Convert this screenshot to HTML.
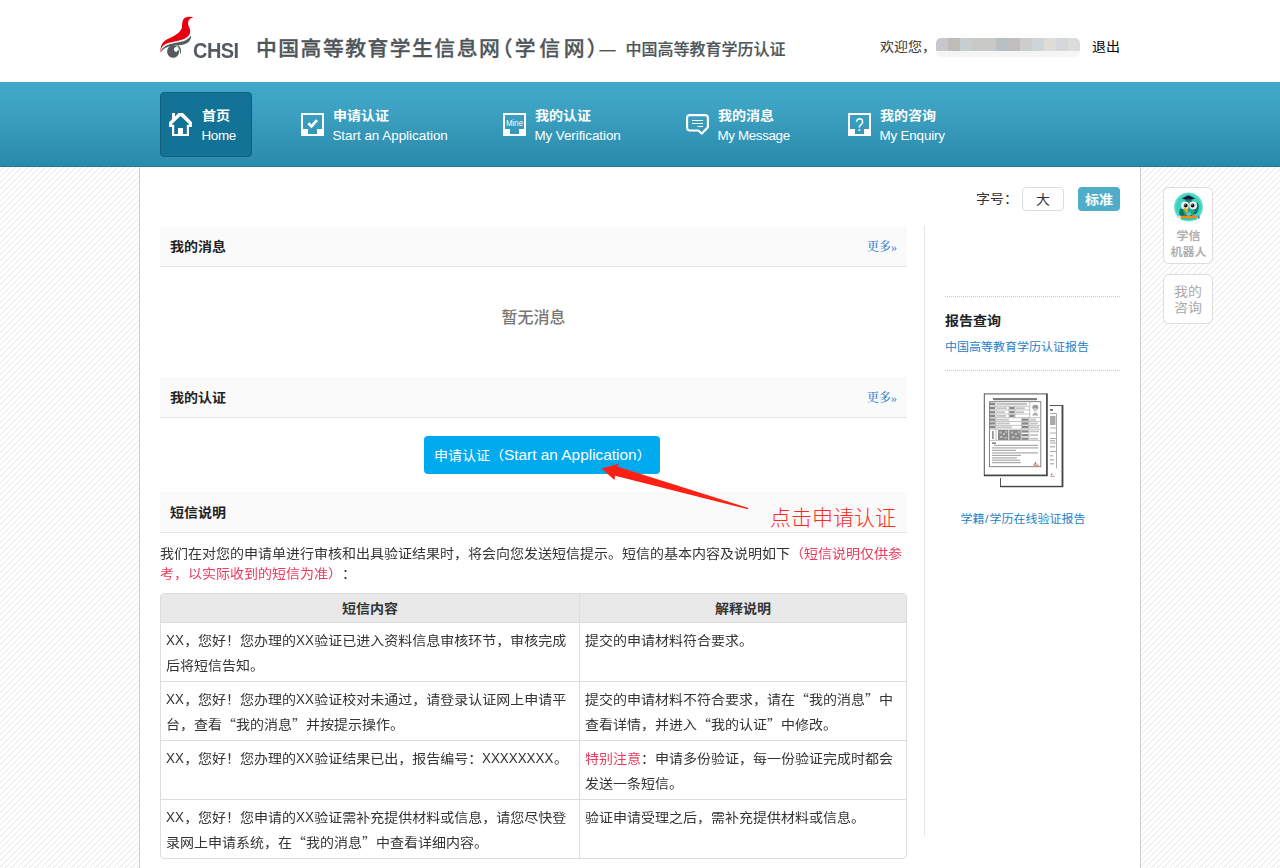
<!DOCTYPE html>
<html lang="zh-CN">
<head>
<meta charset="utf-8">
<title>中国高等教育学历认证</title>
<style>
*{box-sizing:border-box;margin:0;padding:0;text-spacing-trim:space-all}
html,body{width:1280px;height:868px;overflow:hidden;background:#fff}
body{position:relative;font-family:"Liberation Sans","Noto Sans CJK SC",sans-serif;font-size:14px;color:#333;line-height:1}
a{text-decoration:none;color:inherit}
.abs{position:absolute;white-space:nowrap}
#bgpat{position:absolute;left:0;top:167px;width:1280px;height:701px}
#header{position:absolute;left:0;top:0;width:1280px;height:82px;background:#fff}
#nav{position:absolute;left:0;top:82px;width:1280px;height:85px;background:linear-gradient(#42a9c9 0%,#3b9fc0 40%,#2a8aab 100%);border-bottom:1px solid #1c7f9f}
#main{position:absolute;left:139px;top:167px;width:1002px;height:701px;background:#fff;border-left:1px solid #ccc;border-right:1px solid #ccc}
.navi{position:absolute;top:10px;height:65px;color:#fff}
.navi .cn{position:absolute;top:16px;font-size:14px;font-weight:bold;white-space:nowrap;transform:translateY(0.500px) scaleY(0.910)}
.navi .en{position:absolute;top:37px;font-size:13.400px;white-space:nowrap;margin-left:-0.600px;letter-spacing:-0.050px}
.navi svg{position:absolute}
.sech{position:absolute;left:160px;width:747px;height:41px;background:#fafafa;border-bottom:1px solid #e6e6e6}
.sech b{position:absolute;left:10px;top:13px;font-size:14px;color:#222;transform:translateY(0.500px) scaleY(0.910)}
.sech a{position:absolute;right:10px;top:15px;font-size:12px;color:#3380d0;font-family:"Liberation Serif","Noto Serif CJK SC",serif;font-weight:500}

.p{position:absolute;left:160px;top:543px;width:747px;font-size:14px;line-height:23.077px;color:#333;white-space:nowrap;transform:scaleY(0.91);transform-origin:0 0}
.red{color:#ee3a5c}
#tbl{position:absolute;left:160px;top:593px;width:747px;height:266px;border:1px solid #ddd;border-radius:4px;overflow:hidden;background:#fff}
#tbl .th{position:absolute;top:0;height:28px;background:#e8e8e8;font-weight:bold;font-size:14px;line-height:28px;text-align:center;color:#333}
#tbl .td{position:absolute;font-size:14px;line-height:25px;color:#333;padding:5px 5px 0 5px;white-space:nowrap;border-top:1px solid #ddd}
#tbl .c1{left:0;width:419px;border-right:1px solid #ddd}
#tbl .c2{left:419px;width:326px}
.dot{position:absolute;left:945px;width:175px;height:0;border-top:1px dotted #c8c8c8}
.lnk{color:#1c7fc9;font-size:12px}
.fl{position:absolute;left:1163px;width:50px;background:#fff;border:1px solid #ddd;border-radius:6px;text-align:center;color:#aaa}
q{quotes:none;line-height:0;font-family:"Noto Sans CJK SC",sans-serif}
q:before,q:after{content:none}
.pl,.pr{font-feature-settings:"halt";letter-spacing:0}
.pl{margin:0 2px 0 1px}
.pr{margin:0 0 0 -1.500px}
u{text-decoration:none;display:inline-block;line-height:1;font-size:16.500px;transform:scaleX(0.810);transform-origin:0 50%;margin-right:-3.900px}
u.x8{margin-right:-16.400px}
.sq{line-height:27.473px;transform:scaleY(0.91);transform-origin:0 0;margin-top:1px}
.s{display:inline-block;transform:translateY(0.500px) scaleY(0.910)}
.sd{transform:translateY(0.500px) scaleY(0.910)}
</style>
</head>
<body>
<svg id="bgpat" width="1280" height="701">
<defs><pattern id="dg" width="6" height="6" patternUnits="userSpaceOnUse" x="3" y="1">
<path d="M-1 7L7 -1" stroke="#e0e0e0" stroke-width="0.8" fill="none"/>
<path d="M-1 1L1 -1M5 7L7 5" stroke="#e0e0e0" stroke-width="0.8" fill="none"/>
</pattern></defs>
<rect width="1280" height="701" fill="url(#dg)"/>
</svg>

<div id="header">
  <svg class="abs" style="left:155px;top:10px" width="90" height="60" viewBox="155 10 90 60">
<path d="M192.97 17.24C192.56 16.97 189.57 16.56 188.05 16.82C186.53 17.08 184.80 17.70 183.83 18.79C182.86 19.88 182.56 21.78 182.21 23.36C181.86 24.94 182.33 26.70 181.72 28.28C181.11 29.86 180.07 31.44 178.55 32.85C177.03 34.26 174.75 35.49 172.58 36.72C170.41 37.95 167.40 38.82 165.55 40.23C163.70 41.64 162.38 43.17 161.47 45.16C160.56 47.15 159.97 51.90 160.06 52.19C160.15 52.48 160.88 48.38 162.03 46.91C163.18 45.44 164.61 44.36 166.95 43.4C169.29 42.44 173.16 41.94 176.09 41.15C179.02 40.36 182.36 39.72 184.53 38.69C186.70 37.66 188.16 36.23 189.1 34.96C190.04 33.69 190.12 32.32 190.16 31.09C190.19 29.86 189.66 28.81 189.31 27.58C188.96 26.35 188.17 24.88 188.05 23.71C187.93 22.54 188.20 21.43 188.61 20.55C189.02 19.67 189.78 18.99 190.51 18.44C191.24 17.89 193.38 17.51 192.97 17.24Z" fill="#e60012"/>
<path d="M160.48 52.75C160.40 52.52 161.39 49.62 162.59 48.32C163.79 47.02 165.41 45.89 167.66 44.95C169.91 44.01 173.16 43.46 176.09 42.7C179.02 41.94 182.98 41.28 185.23 40.38C187.48 39.48 188.63 38.10 189.59 37.28C190.55 36.46 190.81 35.25 191.0 35.45C191.19 35.65 191.09 37.42 190.72 38.48C190.34 39.53 189.66 40.88 188.75 41.78C187.84 42.68 186.75 43.30 185.23 43.89C183.71 44.48 181.72 44.95 179.61 45.3C177.50 45.65 174.69 45.67 172.58 46.0C170.47 46.33 168.53 46.65 166.95 47.27C165.37 47.89 164.17 48.82 163.09 49.73C162.01 50.64 160.56 52.98 160.48 52.75Z" fill="#545b5f"/>
<ellipse cx="173.100" cy="51.500" rx="6" ry="6.300" fill="#545b5f"/>
<path d="M178.300 45.300Q181.300 47.700 181.100 51Q181 53 180.300 54.500Q180.200 51.500 179.300 49.300Q178.600 47.500 177.300 46Z" fill="#545b5f"/>
<circle cx="176.300" cy="49.500" r="2.400" fill="#fff"/>
<circle cx="177.900" cy="51.400" r="1" fill="#545b5f"/>
</svg>
  <div class="abs" id="logotxt" style="left:192.800px;top:41px;font-size:21.500px;font-weight:bold;color:#545b60;letter-spacing:-0.600px;transform:scaleX(0.930);transform-origin:0 0">CHSI</div>
  <div class="abs" id="title1" style="left:256px;top:39px;font-size:20.800px;font-weight:500;color:#4f5659;letter-spacing:1.500px;-webkit-text-stroke:0.300px #4f5659">中国高等教育学生信息网<span class="pl">（</span><span style="letter-spacing:3.700px">学信网</span><span class="pr">）</span></div>
  <div class="abs" id="title2" style="left:599.500px;top:42px;font-size:16px;font-weight:500;color:#4f5659;-webkit-text-stroke:0.200px #4f5659"><span style="display:inline-block;width:26px">—</span>中国高等教育学历认证</div>
  <div class="abs sd" id="welcome" style="left:880px;top:38.500px;font-size:14px;color:#333">欢迎您，</div>
  <div class="abs" id="mosaic" style="left:936px;top:37.500px;width:144px;height:19px;border-radius:5px;overflow:hidden;filter:blur(0.6px)"><i style="position:absolute;left:0px;top:0;width:12px;height:13px;background:#c9c7cb"></i><i style="position:absolute;left:0px;top:13px;width:12px;height:6px;background:#f5f5f5"></i><i style="position:absolute;left:12px;top:0;width:12px;height:13px;background:#bfbbb8"></i><i style="position:absolute;left:12px;top:13px;width:12px;height:6px;background:#f5f5f5"></i><i style="position:absolute;left:24px;top:0;width:12px;height:13px;background:#c8cdd0"></i><i style="position:absolute;left:24px;top:13px;width:12px;height:6px;background:#f5f5f5"></i><i style="position:absolute;left:36px;top:0;width:12px;height:13px;background:#c9c9c8"></i><i style="position:absolute;left:36px;top:13px;width:12px;height:6px;background:#f5f5f5"></i><i style="position:absolute;left:48px;top:0;width:12px;height:13px;background:#c9c9c8"></i><i style="position:absolute;left:48px;top:13px;width:12px;height:6px;background:#f5f5f5"></i><i style="position:absolute;left:60px;top:0;width:12px;height:13px;background:#b9c0c4"></i><i style="position:absolute;left:60px;top:13px;width:12px;height:6px;background:#f5f5f5"></i><i style="position:absolute;left:72px;top:0;width:12px;height:13px;background:#c0bebe"></i><i style="position:absolute;left:72px;top:13px;width:12px;height:6px;background:#f5f5f5"></i><i style="position:absolute;left:84px;top:0;width:12px;height:13px;background:#cdcdcd"></i><i style="position:absolute;left:84px;top:13px;width:12px;height:6px;background:#f5f5f5"></i><i style="position:absolute;left:96px;top:0;width:12px;height:13px;background:#cdd5d9"></i><i style="position:absolute;left:96px;top:13px;width:12px;height:6px;background:#f5f5f5"></i><i style="position:absolute;left:108px;top:0;width:12px;height:13px;background:#dedcd8"></i><i style="position:absolute;left:108px;top:13px;width:12px;height:6px;background:#f5f5f5"></i><i style="position:absolute;left:120px;top:0;width:12px;height:13px;background:#d5d8da"></i><i style="position:absolute;left:120px;top:13px;width:12px;height:6px;background:#f5f5f5"></i><i style="position:absolute;left:132px;top:0;width:12px;height:13px;background:#dcdcda"></i><i style="position:absolute;left:132px;top:13px;width:12px;height:6px;background:#f5f5f5"></i></div>
  <div class="abs sd" id="logout" style="left:1092px;top:38.500px;font-size:14px;color:#000">退出</div>
</div>

<div id="nav">
  <div class="navi" style="left:160px;width:92px;background:#127396;border:1px solid #0d5f7c;border-radius:4px">
    <svg style="left:8px;top:20px" width="24" height="24" viewBox="0 0 24 24"><path fill="#fff" fill-rule="evenodd" d="M9.500 0H14L23 9.300V14H20V23H3V14H0V9.300L3 6.300V0H6V3.500ZM11.500 3.100L3.100 11V11.700H5.200V21H9V15H14V21H17.800V11.700H20V11Z"/></svg><span class="cn" style="left:41px;top:15px">首页</span><span class="en" style="left:41px;top:36px;letter-spacing:-0.300px">Home</span>
  </div>
  <div class="navi" style="left:300px"><svg style="left:1px;top:21px" width="23" height="23" viewBox="0 0 23 23"><path fill="#fff" fill-rule="evenodd" d="M0 0H23V23H0ZM2 2V16H7V21H16V16H21V2Z"/><path d="M7.300 10.200L10.500 13.300L16 7.200" fill="none" stroke="#fff" stroke-width="2.700"/></svg><span class="cn" style="left:33px">申请认证</span><span class="en" style="left:33px;letter-spacing:0px">Start an Application</span></div>
  <div class="navi" style="left:502px"><svg style="left:1px;top:21px" width="23" height="23" viewBox="0 0 23 23"><path fill="#fff" fill-rule="evenodd" d="M0 0H23V23H0ZM2 2V16H7V21H16V16H21V2Z"/><text x="11.500" y="13" font-family="Liberation Sans,sans-serif" font-size="9" fill="#fff" text-anchor="middle" textLength="17" lengthAdjust="spacingAndGlyphs">Mine</text></svg><span class="cn" style="left:33px">我的认证</span><span class="en" style="left:33px">My Verification</span></div>
  <div class="navi" style="left:685px"><svg style="left:0px;top:21px" width="25" height="24" viewBox="0 0 25 24"><path d="M5 2.100H20Q22.900 2.100 22.900 5V14.300L16.800 20.500L13.200 17.500H5Q2.100 17.500 2.100 14.600V5Q2.100 2.100 5 2.100Z" fill="none" stroke="#fff" stroke-width="2.100" stroke-linejoin="miter"/><path d="M7 7.500H18M7 10.500H18M12.500 13.500H18" stroke="#fff" stroke-width="1.100" fill="none"/></svg><span class="cn" style="left:33px">我的消息</span><span class="en" style="left:33px;letter-spacing:-0.350px">My Message</span></div>
  <div class="navi" style="left:847px"><svg style="left:1px;top:21px" width="23" height="23" viewBox="0 0 23 23"><path fill="#fff" fill-rule="evenodd" d="M0 0H23V23H0ZM2 2V16H7V21H16V16H21V2Z"/><text transform="translate(11.500 18.100) scale(0.86 1)" x="0" y="0" font-family="Liberation Sans,sans-serif" font-size="17.500" fill="#fff" text-anchor="middle">?</text></svg><span class="cn" style="left:33px">我的咨询</span><span class="en" style="left:33px;letter-spacing:-0.150px">My Enquiry</span></div>
</div>

<div id="main"></div>

<div class="abs sd" style="left:976px;top:191px;font-size:14px;color:#333">字号：</div>
<div class="abs" style="left:1022px;top:187px;width:42px;height:24px;border:1px solid #ddd;border-radius:4px;background:#fff;text-align:center;line-height:22px;font-size:14px;color:#333"><span class="s">大</span></div>
<div class="abs" style="left:1078px;top:187px;width:42px;height:24px;border-radius:4px;background:#4fadc9;text-align:center;line-height:24px;font-size:14px;color:#fff;font-weight:bold"><span class="s">标准</span></div>

<div class="sech" style="top:226px"><b>我的消息</b><a>更多»</a></div>
<div class="abs" style="left:160px;top:310px;width:747px;text-align:center;font-size:16px;color:#777;font-weight:500">暂无消息</div>
<div class="sech" style="top:377px"><b>我的认证</b><a>更多»</a></div>
<div class="abs" style="left:424px;top:436px;width:236px;height:38px;background:#00aaef;border-radius:4px;color:#fff;font-size:14px;line-height:37px;padding-left:10px"><span class="s">申请认证（</span><span style="font-size:15.400px;letter-spacing:0">Start an Application</span><span class="s">）</span></div>
<div class="sech" style="top:492px"><b>短信说明</b></div>


<svg class="abs" style="left:590px;top:455px" width="170" height="60" viewBox="590 455 170 60">
<polygon points="748.300,507.900 617,466.600 619.500,463.600 601.500,468.600 614.500,480 615,475.800 747.800,509.300" fill="#ff2014"/>
</svg>
<div class="abs" style="left:770px;top:507px;font-size:21px;color:#ff2a1e;font-weight:300">点击申请认证</div>

<div class="p">我们在对您的申请单进行审核和出具验证结果时，将会向您发送短信提示。短信的基本内容及说明如下<span class="red">（短信说明仅供参<br>考，以实际收到的短信为准）</span>：</div>

<div id="tbl">
  <div class="th c1"><span class="s">短信内容</span></div><div class="th c2"><span class="s">解释说明</span></div>
  <div class="td c1" style="top:28px;height:59px"><div class="sq"><u>XX</u>，您好！您办理的<u>XX</u>验证已进入资料信息审核环节，审核完成<br>后将短信告知。</div></div>
  <div class="td c2" style="top:28px;height:59px"><div class="sq">提交的申请材料符合要求。</div></div>
  <div class="td c1" style="top:87px;height:59px"><div class="sq"><u>XX</u>，您好！您办理的<u>XX</u>验证校对未通过，请登录认证网上申请平<br>台，查看<q>“</q>我的消息<q>”</q>并按提示操作。</div></div>
  <div class="td c2" style="top:87px;height:59px"><div class="sq">提交的申请材料不符合要求，请在<q>“</q>我的消息<q>”</q>中<br>查看详情，并进入<q>“</q>我的认证<q>”</q>中修改。</div></div>
  <div class="td c1" style="top:146px;height:59px"><div class="sq"><u>XX</u>，您好！您办理的<u>XX</u>验证结果已出，报告编号：<u class="x8">XXXXXXXX</u>。</div></div>
  <div class="td c2" style="top:146px;height:59px"><div class="sq"><span class="red">特别注意</span>：申请多份验证，每一份验证完成时都会<br>发送一条短信。</div></div>
  <div class="td c1" style="top:205px;height:59px"><div class="sq"><u>XX</u>，您好！您申请的<u>XX</u>验证需补充提供材料或信息，请您尽快登<br>录网上申请系统，在<q>“</q>我的消息<q>”</q>中查看详细内容。</div></div>
  <div class="td c2" style="top:205px;height:59px"><div class="sq">验证申请受理之后，需补充提供材料或信息。</div></div>
</div>

<div class="abs" style="left:924px;top:226px;width:1px;height:610px;background:#e6e6e6"></div>
<div class="dot" style="top:296px"></div>
<div class="abs sd" style="left:945px;top:313px;font-size:14px;font-weight:bold;color:#222">报告查询</div>
<div class="abs lnk sd" style="left:945px;top:341px">中国高等教育学历认证报告</div>
<div class="dot" style="top:370px"></div>
<svg class="abs" style="left:975px;top:385px" width="96" height="110" viewBox="975 385 96 110">
<g id="docback">
<rect x="1000.500" y="405.500" width="61.500" height="80.800" fill="#fff" stroke="#555" stroke-width="1"/>
<path d="M1000 486.600H1062.700V405" fill="none" stroke="#444" stroke-width="1.400"/>
<g stroke="#999" stroke-width="0.800" fill="none"><path d="M1050 413.500H1056.500V468.500M1050 428H1056.500M1050 433H1056.500M1050 438.500H1056.500M1050 443H1056.500M1050 451.500H1056.500"/></g>
<rect x="1050" y="416" width="5.500" height="9" fill="#aaa"/>
<rect x="1050" y="409" width="3" height="1.800" fill="#777"/>
<g fill="#bbb"><rect x="1050" y="440" width="5" height="1.500"/><rect x="1050" y="446" width="5" height="1.500"/><rect x="1050" y="455" width="3" height="1.500"/><rect x="1050" y="459" width="4" height="1.500"/><rect x="1050" y="463" width="4" height="1.500"/></g>
<path d="M1050.500 475.500l2-3.300-.7 2.500 1.600-.3z" fill="#d22"/><rect x="1050.500" y="475.800" width="4" height="1.200" fill="#c99"/>
</g>
<g id="docfront">
<rect x="983" y="392.500" width="66.500" height="85.500" fill="#fff"/>
<rect x="984.300" y="393.900" width="62.300" height="81.300" fill="#fff" stroke="#555" stroke-width="1"/>
<path d="M983.900 475.500H1047V393.500" fill="none" stroke="#444" stroke-width="1.500"/>
<rect x="993" y="398" width="44" height="2.200" fill="#666" opacity="0.850"/>
<rect x="989.500" y="401.700" width="51.300" height="65" fill="none" stroke="#777" stroke-width="0.900"/>
<g stroke="#aaa" stroke-width="0.700" fill="none">
<path d="M989.500 406.300H1029.800M989.500 410H1029.800M989.500 414H1029.800M989.500 417.700H1040.800M989.500 421.500H1040.800M989.500 425.400H1040.800M989.500 429.200H1040.800M989.500 440.400H1040.800"/>
<path d="M1029.800 401.700V417.700M996 401.700V429M1009 406.300V417.700M1015 406.300V417.700M1021.500 417.700V440.400M1029 417.700V440.400M996 429.200V440.400"/>
</g>
<g fill="#888"><rect x="990" y="402.700" width="5" height="2.600"/><rect x="990" y="407" width="5" height="2.300"/><rect x="990" y="411" width="5" height="2.300"/><rect x="990" y="414.700" width="5" height="2.300"/><rect x="1009.500" y="407" width="5" height="2.300"/><rect x="1009.500" y="411" width="5" height="2.300"/><rect x="1009.500" y="414.700" width="5" height="2.300"/><rect x="990" y="418.500" width="5.500" height="2.300"/><rect x="990" y="422.300" width="5.500" height="2.300"/><rect x="990" y="426" width="5.500" height="2.300"/><rect x="1022" y="418.500" width="6.500" height="2.300"/><rect x="1022" y="422.300" width="6.500" height="2.300"/><rect x="1022" y="426" width="6.500" height="2.300"/><rect x="1022" y="430.300" width="6.500" height="2.300"/><rect x="1022" y="434" width="6.500" height="2.300"/><rect x="1022" y="437.600" width="6.500" height="2.300"/></g>
<g fill="#c4c4c4"><rect x="997" y="403" width="30" height="2.200"/><rect x="997" y="407.300" width="10" height="1.800"/><rect x="997" y="411.300" width="8" height="1.800"/><rect x="997" y="415" width="9" height="1.800"/><rect x="1016" y="407.300" width="9" height="1.800"/><rect x="1016" y="411.300" width="8" height="1.800"/><rect x="997" y="418.800" width="12" height="1.800"/><rect x="997" y="422.600" width="13" height="1.800"/><rect x="997" y="426.400" width="15" height="1.800"/><rect x="1030" y="418.800" width="6" height="1.800"/><rect x="1030" y="422.600" width="8" height="1.800"/><rect x="1030" y="426.400" width="9" height="1.800"/><rect x="1030" y="430.500" width="9" height="1.800"/><rect x="1030" y="434.200" width="8" height="1.800"/><rect x="1030" y="437.800" width="8" height="1.800"/></g>
<ellipse cx="1035.300" cy="407.300" rx="3" ry="2.600" fill="#999"/><path d="M1032 415.500q3.300-6 6.600 0z" fill="#aaa"/><rect x="1033.300" y="408" width="4" height="3.500" rx="1.500" fill="#ccc"/>
<rect x="998" y="430" width="10.400" height="10" fill="#8a8a8a"/><rect x="1009.200" y="430" width="11.600" height="10" fill="#8a8a8a"/>
<g fill="#fff" opacity="0.450"><rect x="999.500" y="431.500" width="2" height="2"/><rect x="1003" y="433" width="2" height="2"/><rect x="1005.500" y="431" width="1.500" height="2"/><rect x="1000" y="436" width="2.500" height="2"/><rect x="1004.500" y="437" width="2" height="1.500"/><rect x="1011" y="431.500" width="2" height="2"/><rect x="1015" y="433" width="2" height="2"/><rect x="1018" y="431" width="1.500" height="2"/><rect x="1012" y="436" width="2.500" height="2"/><rect x="1016.500" y="437" width="2" height="1.500"/></g>
<rect x="992" y="431" width="1.800" height="8" fill="#999"/>
<g fill="#aaa"><rect x="992" y="442.500" width="4" height="1.300" fill="#666"/><rect x="994" y="444.800" width="44" height="1.200"/><rect x="992" y="447.300" width="46" height="1.200"/><rect x="992" y="449.800" width="24" height="1.200"/><rect x="992" y="452.300" width="46" height="1.200"/><rect x="992" y="454.800" width="29" height="1.200"/><rect x="992" y="457.300" width="25" height="1.200"/><rect x="992" y="459.600" width="28" height="1.200"/><rect x="992" y="462" width="29" height="1.200"/></g>
<path d="M1033.500 465l2.800-4.300-.8 3 2.200-.4z" fill="#d22"/><rect x="1033.800" y="464.500" width="5" height="1.300" fill="#c88"/>
</g>
</svg>
<div class="abs lnk sd" style="left:945px;top:513px;width:156px;text-align:center">学籍<span style="letter-spacing:1px;margin-left:0.500px">/</span>学历在线验证报告</div>

<div class="fl" style="top:187px;height:77px">
  <svg class="abs" style="left:10px;top:4.400px" width="29" height="30" viewBox="1174 192.500 29 30">
<defs><radialGradient id="og" cx="0.5" cy="0.5" r="0.5"><stop offset="0" stop-color="#2fc9b3"/><stop offset="0.820" stop-color="#3fd0bb"/><stop offset="1" stop-color="#74e4d3"/></radialGradient></defs>
<circle cx="1188.500" cy="207.500" r="14.500" fill="url(#og)"/>
<path d="M1180.500 209q-2.500 4 0 7.500l4 .5 1-7z" fill="#0c7463"/>
<path d="M1197.500 202.500q3 5.500-1 11.500l-4 1.500 1-6q3-3 4-7z" fill="#0c7463"/>
<ellipse cx="1188.800" cy="209.500" rx="5.800" ry="6.800" fill="#23a892"/>
<path d="M1181.900 198.900l6.600-3.100 6.600 3.100-6.600 2.300z" fill="#19123c"/>
<rect x="1185.300" y="199.800" width="6.500" height="2.600" fill="#1b7a6a"/>
<circle cx="1185" cy="205.900" r="3.900" fill="#f0eef8"/><circle cx="1193.100" cy="205.900" r="3.900" fill="#f0eef8"/>
<circle cx="1185.700" cy="206" r="1.900" fill="#111"/><circle cx="1192.600" cy="206" r="1.900" fill="#111"/>
<circle cx="1185" cy="205.300" r="0.600" fill="#fff"/><circle cx="1192" cy="205.300" r="0.600" fill="#fff"/>
<path d="M1182.800 207.500l5 2.300-.3 3.400-1.800-.4z" fill="#f7a81b"/>
<circle cx="1188.800" cy="207.300" r="0.800" fill="#e8a020"/>
<ellipse cx="1188.800" cy="214.300" rx="2.300" ry="1.600" fill="#5ccbb8"/>
<rect x="1184.600" y="215.400" width="2.300" height="1.600" rx="0.800" fill="#6b3a22"/><rect x="1190.300" y="215.400" width="2.300" height="1.600" rx="0.800" fill="#6b3a22"/>
<rect x="1180.500" y="216.300" width="17.500" height="2.600" fill="#ff8a0a"/>
<path d="M1180.500 216.300l-3.600 1.300 3.600 1.300z" fill="#f5e9c8"/><path d="M1177.700 217.300l-1.300.3 1.300.4z" fill="#7a66c8"/>
<rect x="1198" y="215.900" width="1.600" height="3.300" fill="#1e8df0"/>
<rect x="1181" y="219" width="16" height="1" fill="#19b9b0"/>
</svg>
  <div class="abs" style="left:0.500px;top:40px;width:48px;font-size:12px;font-weight:bold;line-height:16px;white-space:normal;color:#b0b0b0"><span class="s">学信</span><br><span class="s">机器人</span></div>
</div>
<div class="fl" style="top:274px;height:50px">
  <div class="abs" style="left:0;top:7.500px;width:48px;font-size:14px;line-height:16px;white-space:normal;color:#aaa"><span class="s">我的</span><br><span class="s">咨询</span></div>
</div>
</body>
</html>
